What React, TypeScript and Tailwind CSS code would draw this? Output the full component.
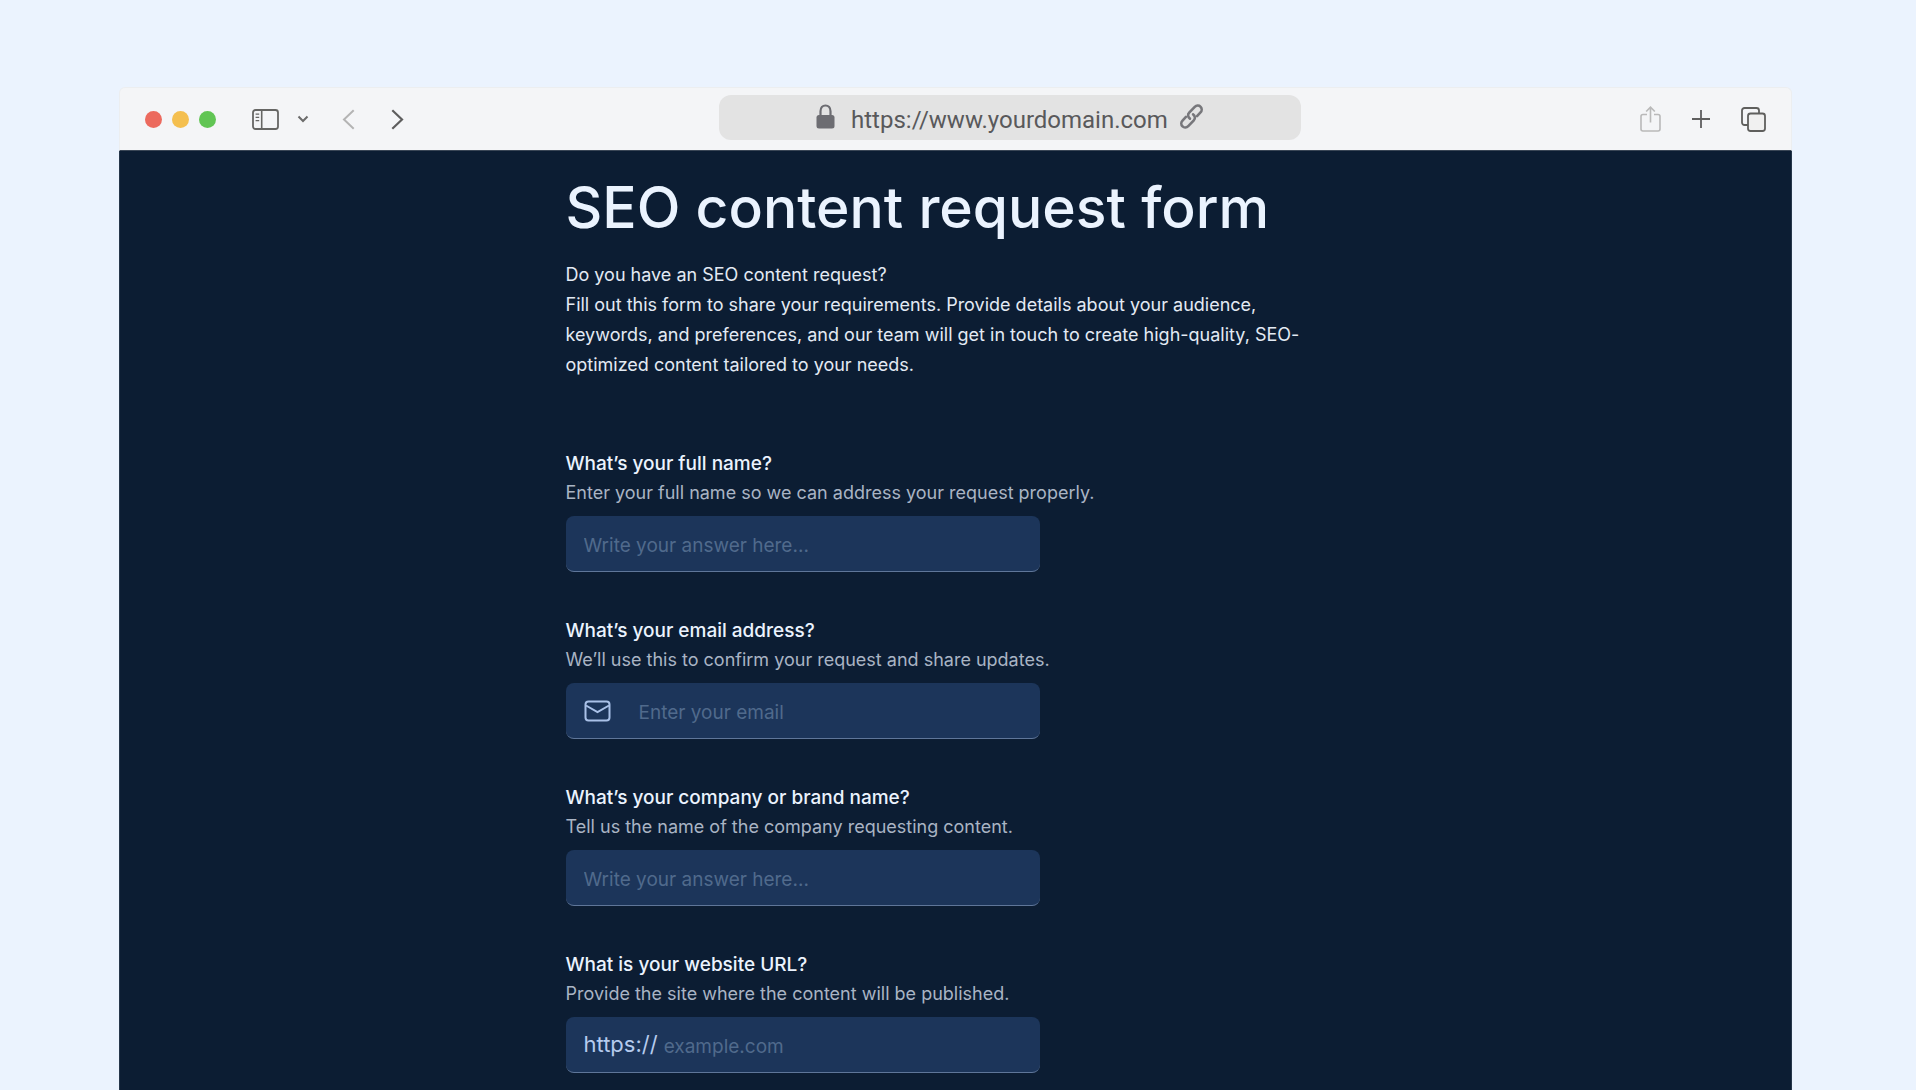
import type { ReactNode } from "react";

const FIELDS = [
  {
    id: "name",
    type: "text",
    label: "What’s your full name?",
    help: "Enter your full name so we can address your request properly.",
    placeholder: "Write your answer here...",
  },
  {
    id: "email",
    type: "email",
    label: "What’s your email address?",
    help: "We’ll use this to confirm your request and share updates.",
    placeholder: "Enter your email",
    prefix: <MailIcon />,
    gap: "gap-7",
  },
  {
    id: "company",
    type: "text",
    label: "What’s your company or brand name?",
    help: "Tell us the name of the company requesting content.",
    placeholder: "Write your answer here...",
  },
  {
    id: "website",
    type: "text",
    label: "What is your website URL?",
    help: "Provide the site where the content will be published.",
    placeholder: "example.com",
    prefix: <span className="text-[22px] text-[#b5cbee]">https://</span>,
    gap: "gap-1.5",
  },
];

export default function App() {
  return (
    <div className="min-h-screen flex flex-col bg-[#ebf3fe] pt-[87px] pl-[119px] pr-[124px] font-['Inter',sans-serif]">
      <div className="flex-1 flex flex-col">
        <Toolbar />

        {/* Page */}
        <main className="flex-1 bg-[#0c1d33] border-x border-[#26364a] px-6 pt-[21px] pb-4">
          <form className="w-full max-w-[780px] mx-auto">
            <h1 className="text-[57px] leading-[72px] font-medium text-[#ebf3fe]">
              SEO content request form
            </h1>
            <p className="mt-4 text-[18px] leading-[30px] text-[#e3eaf4]">
              Do you have an SEO content request?
              <br />
              Fill out this form to share your requirements. Provide details
              about your audience, keywords, and preferences, and our team will
              get in touch to create high-quality, SEO-optimized content
              tailored to your needs.
            </p>

            <div className="mt-[69px] flex flex-col gap-11">
              {FIELDS.map((field) => (
                <Field key={field.id} {...field} />
              ))}
            </div>
          </form>
        </main>
      </div>
    </div>
  );
}

type FieldProps = {
  id: string;
  type: string;
  label: string;
  help: string;
  placeholder: string;
  prefix?: ReactNode;
  gap?: string;
};

function Field({ id, type, label, help, placeholder, prefix, gap }: FieldProps) {
  return (
    <div>
      <label
        htmlFor={id}
        className="block text-[19px] leading-[29px] font-medium text-[#ebf3fe]"
      >
        {label}
      </label>
      <p id={id + "-help"} className="text-[18px] leading-[30px] text-[#a9b4c4]">
        {help}
      </p>
      <div
        className={`mt-2 flex items-center ${gap ?? ""} w-full max-w-[474px] h-14 px-[18px] rounded-lg bg-[#1c355a] border-b border-[#5f7699]`}
      >
        {prefix}
        <input
          id={id}
          type={type}
          aria-describedby={id + "-help"}
          placeholder={placeholder}
          className="flex-1 min-w-0 pt-1.5 bg-transparent text-[19px] text-[#ebf3fe] placeholder:text-[#506a8c] outline-none"
        />
      </div>
    </div>
  );
}

function Toolbar() {
  return (
    <header className="grid grid-cols-[11fr_582px_9fr] items-center h-16 bg-[#f4f5f7] border-x border-t border-[#eceef0] border-b border-b-[#3a4656] rounded-t-md">
      <div className="flex items-center pl-[25px]">
        <div className="flex gap-[10px]">
          <span className="size-[17px] rounded-full bg-[#ec6a5e]" />
          <span className="size-[17px] rounded-full bg-[#f4bf4f]" />
          <span className="size-[17px] rounded-full bg-[#61c554]" />
        </div>
        <button type="button" aria-label="Sidebar" className="ml-9">
          <svg width="27" height="21" viewBox="0 0 27 21" fill="none" stroke="#666664">
            <rect x="1" y="1" width="25" height="19" rx="2.5" strokeWidth="1.8" />
            <path d="M9.7 1v19" strokeWidth="1.6" />
            <path d="M3.6 5.2h3.6M3.6 8.4h3.6M3.6 11.6h3.6" strokeWidth="1.3" />
          </svg>
        </button>
        <button type="button" aria-label="Tab groups" className="ml-[18px]">
          <svg width="12" height="8" viewBox="0 0 12 8" fill="none" stroke="#6b6b6b" strokeWidth="2">
            <path d="M1.5 1.5 6 6l4.500-4.500" />
          </svg>
        </button>
        <button type="button" aria-label="Back" className="ml-[33px]">
          <svg width="13" height="21" viewBox="0 0 13 21" fill="none" stroke="#b4b4b4" strokeWidth="2">
            <path d="M11.700 1.300 2 10.500l9.700 9.200" />
          </svg>
        </button>
        <button type="button" aria-label="Forward" className="ml-9">
          <svg width="13" height="21" viewBox="0 0 13 21" fill="none" stroke="#5e5e5e" strokeWidth="2.2">
            <path d="M1.300 1.300 11 10.500l-9.700 9.200" />
          </svg>
        </button>
      </div>

      <div className="self-start mt-[7px] flex items-center justify-center h-[45px] pt-1 rounded-xl bg-[#e3e3e3] font-['Roboto',sans-serif] text-2xl text-[#59595b]">
        <svg width="19" height="26" viewBox="0 0 19 26" className="mr-4 mb-1.5">
          <path
            d="M4.500 12V7.300C4.500 3.800 6.600 1.500 9.500 1.500s5 2.300 5 5.800V12"
            fill="none"
            stroke="#6d6d72"
            strokeWidth="2.2"
          />
          <rect x="0.5" y="11" width="18" height="13.5" rx="2.5" fill="#6d6d72" />
        </svg>
        https://www.yourdomain.com
        {/* Chain link */}
        <svg
          width="25"
          height="25"
          viewBox="0 0 25 27"
          fill="none"
          stroke="#77777b"
          strokeWidth="2.8"
          strokeLinecap="round"
          className="ml-[11px] mb-1.5"
        >
          <path d="M10.800 15.800C8.300 14 8.300 11.200 10 9.400L16 3.200C17.800 1.400 20.500 1.200 22.200 2.900C24 4.600 23.900 7.300 22.200 9.100L18.500 13" />
          <path d="M14.200 11.200C16.700 13 16.700 15.800 15 17.600L9 23.800C7.200 25.600 4.500 25.800 2.800 24.100C1 22.400 1.100 19.700 2.800 17.900L6.500 14" />
        </svg>
      </div>

      <div className="flex items-center justify-end pr-[25px]">
        <button type="button" aria-label="Share">
          <svg width="21" height="26" viewBox="0 0 21 26" fill="none" stroke="#b9b9b9" strokeWidth="1.6">
            <path d="M7 8.500H3a2 2 0 0 0-2 2V23a2 2 0 0 0 2 2h15a2 2 0 0 0 2-2V10.500a2 2 0 0 0-2-2h-4" />
            <path d="M10.500 16.500V1.500M6.200 5.500l4.300-4.300 4.300 4.300" />
          </svg>
        </button>
        <button type="button" aria-label="New tab" className="ml-[30px]">
          <svg width="20" height="20" viewBox="0 0 20 20" fill="none" stroke="#5f5f5f" strokeWidth="1.8">
            <path d="M10 1v18M1 10h18" />
          </svg>
        </button>
        <button type="button" aria-label="Show all tabs" className="ml-[30px]">
          <svg width="25" height="25" viewBox="0 0 25 25" stroke="#5f5f5d" strokeWidth="1.8">
            <rect x="1" y="1" width="17" height="17" rx="2.5" fill="none" />
            <rect x="7" y="6.5" width="17" height="17.5" rx="2.5" fill="#f0f0f0" />
          </svg>
        </button>
      </div>
    </header>
  );
}

function MailIcon() {
  return (
    <svg width="27" height="22" viewBox="0 0 27 22" fill="none" stroke="#a9c1e8" strokeWidth="2">
      <rect x="1.5" y="1.5" width="24" height="19" rx="3" />
      <path d="M2 5.500l11.500 6.500L25 5.500" />
    </svg>
  );
}
